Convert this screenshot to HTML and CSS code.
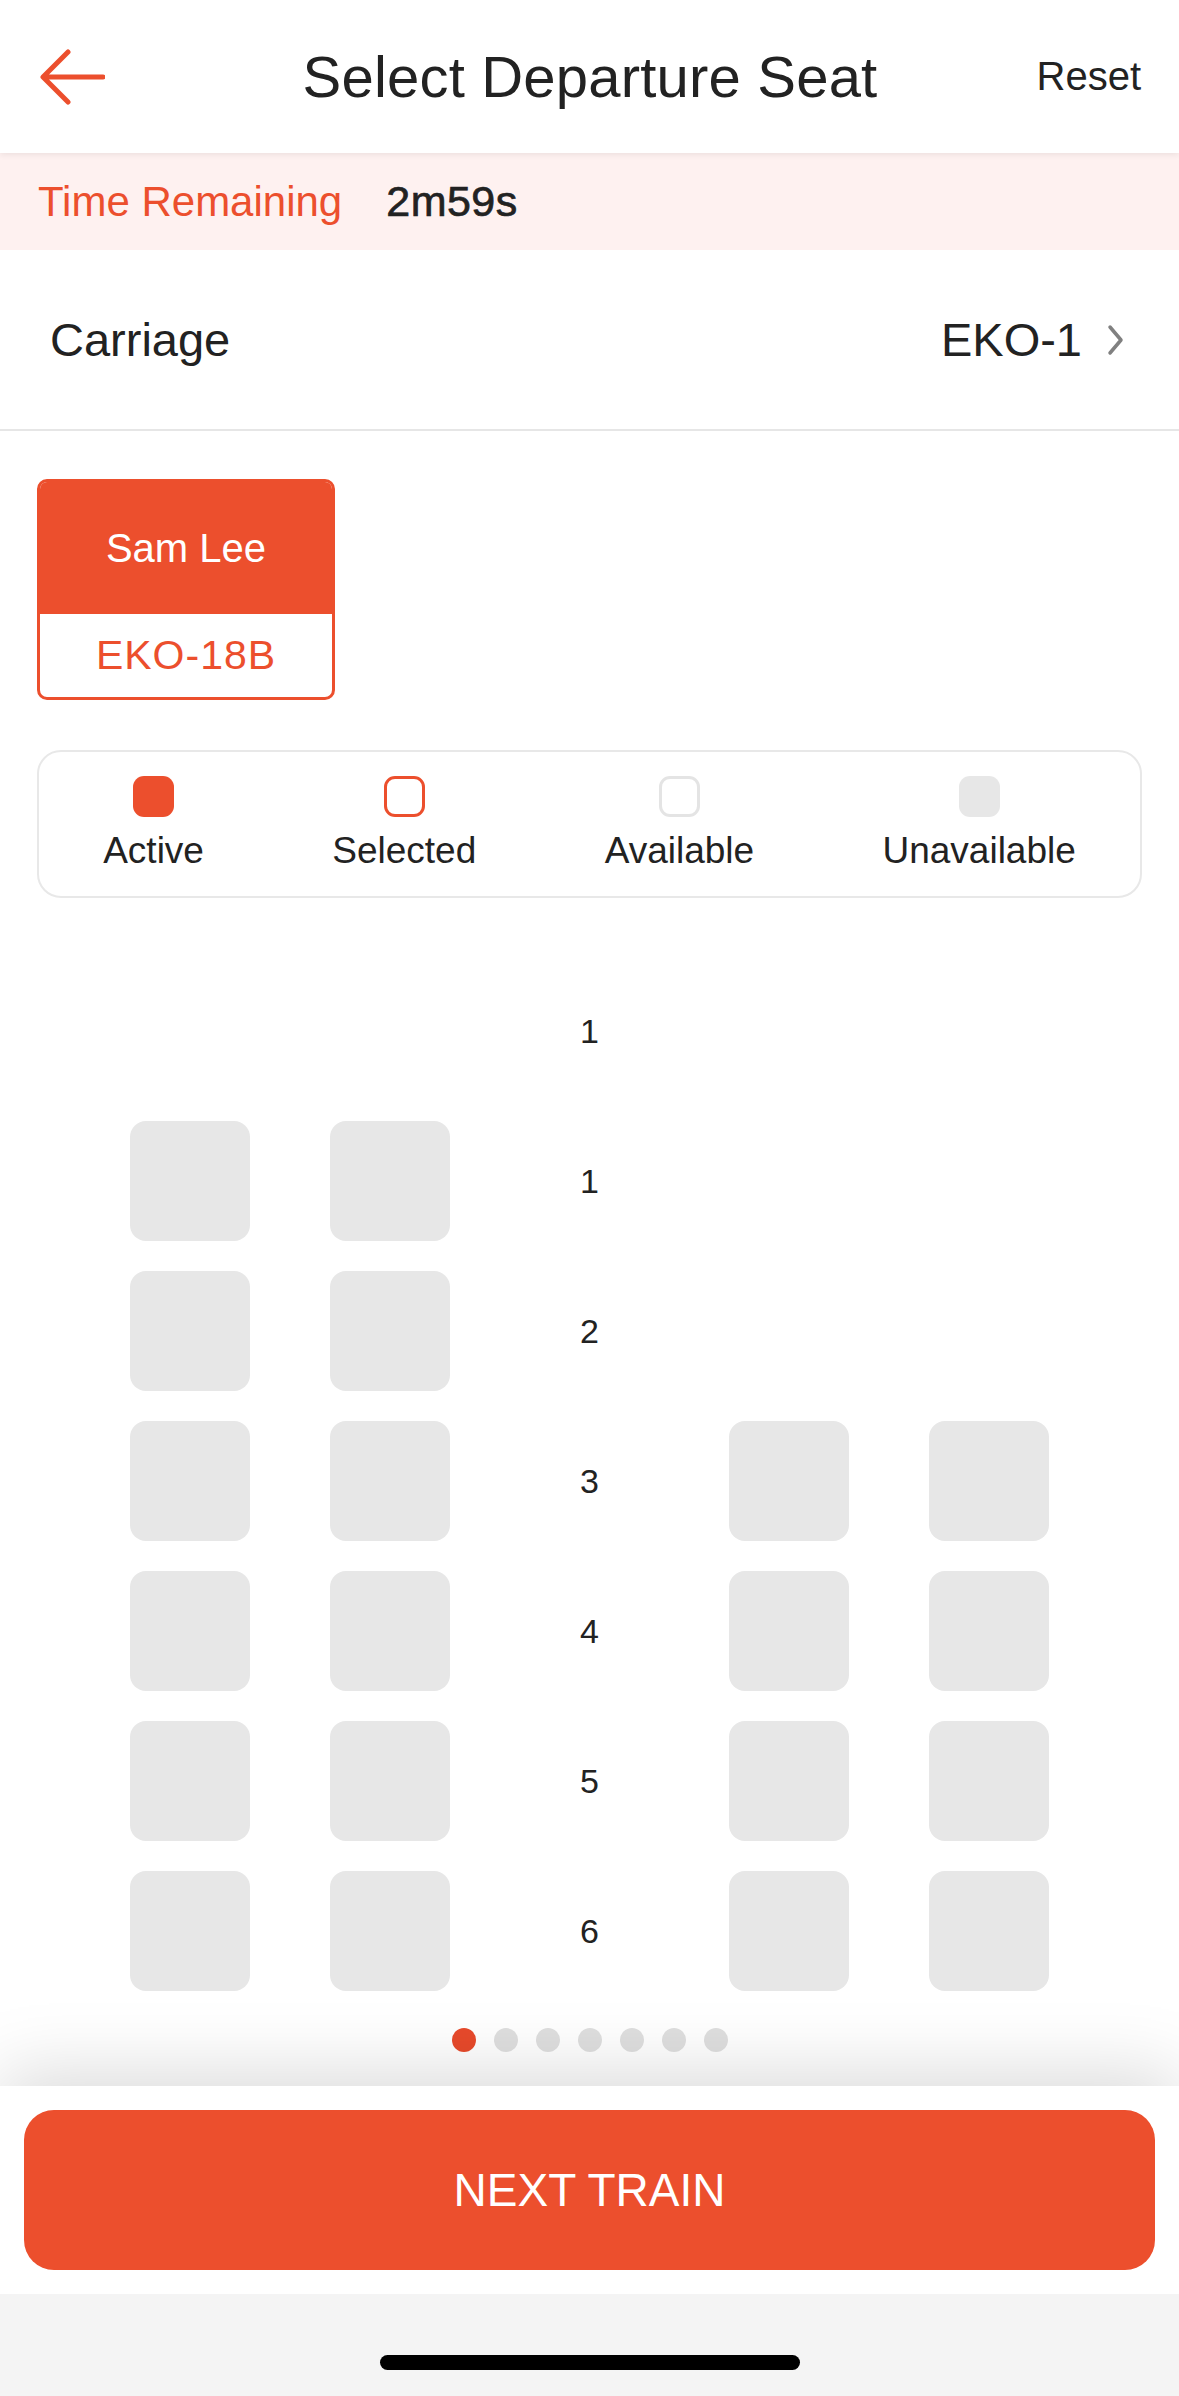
FILE: index.html
```html
<!DOCTYPE html>
<html lang="en">
<head>
    <meta charset="UTF-8">
    <meta name="viewport" content="width=device-width, initial-scale=1.0">
    <title>Select Departure Seat</title>
    <link rel="stylesheet" href="styles.css">
</head>
<body>
    <div class="page">
        <header class="topbar">
            <a class="back" href="#">
                <svg width="66" height="56" viewBox="0 0 66 56">
                    <path d="M64 28 H5 M29 3 L4 28 L29 53" fill="none" stroke="#ec4f2d" stroke-width="5" stroke-linecap="round" stroke-linejoin="round"/>
                </svg>
            </a>
            <h1 class="title">Select Departure Seat</h1>
            <a class="reset" href="#">Reset</a>
        </header>

        <div class="timer">
            <span class="timer-label">Time Remaining</span>
            <span class="timer-value">2m59s</span>
        </div>

        <div class="carriage">
            <span>Carriage</span>
            <span class="carriage-pick">
                EKO-1
                <svg width="18" height="32" viewBox="0 0 18 32">
                    <path d="M4 3 L15 16 L4 29" fill="none" stroke="#808080" stroke-width="3.5" stroke-linecap="round" stroke-linejoin="round"/>
                </svg>
            </span>
        </div>

        <div class="passenger">
            <div class="passenger-name">Sam Lee</div>
            <div class="passenger-seat">EKO-18B</div>
        </div>

        <div class="legend">
            <div class="legend-item">
                <span class="box box-active"></span>
                <span class="legend-text">Active</span>
            </div>
            <div class="legend-item">
                <span class="box box-selected"></span>
                <span class="legend-text">Selected</span>
            </div>
            <div class="legend-item">
                <span class="box box-available"></span>
                <span class="legend-text">Available</span>
            </div>
            <div class="legend-item">
                <span class="box box-unavailable"></span>
                <span class="legend-text">Unavailable</span>
            </div>
        </div>

        <div class="seatmap">
            <div></div><div></div><div class="row-num">1</div><div></div><div></div>

            <div class="seat"></div><div class="seat"></div><div class="row-num">1</div><div></div><div></div>
            <div class="seat"></div><div class="seat"></div><div class="row-num">2</div><div></div><div></div>
            <div class="seat"></div><div class="seat"></div><div class="row-num">3</div><div class="seat"></div><div class="seat"></div>
            <div class="seat"></div><div class="seat"></div><div class="row-num">4</div><div class="seat"></div><div class="seat"></div>
            <div class="seat"></div><div class="seat"></div><div class="row-num">5</div><div class="seat"></div><div class="seat"></div>
            <div class="seat"></div><div class="seat"></div><div class="row-num">6</div><div class="seat"></div><div class="seat"></div>
        </div>

        <div class="dots">
            <span class="dot on"></span>
            <span class="dot"></span>
            <span class="dot"></span>
            <span class="dot"></span>
            <span class="dot"></span>
            <span class="dot"></span>
            <span class="dot"></span>
        </div>

        <footer class="footer">
            <div class="footer-main">
                <button class="next">NEXT TRAIN</button>
            </div>
            <div class="home-area">
                <span class="home-bar"></span>
            </div>
        </footer>
    </div>
</body>
</html>
```

FILE: styles.css
```css
body {
    margin: 0;
    font-family: 'Liberation Sans', Arial, sans-serif;
    color: #222;
    background: #fff;
}
.page {
    min-height: 100vh;
    display: flex;
    flex-direction: column;
    overflow: hidden;
}
.topbar {
    height: 153px;
    display: grid;
    grid-template-columns: 1fr auto 1fr;
    align-items: center;
    padding: 0 38px 0 39px;
    background: #fff;
    position: relative;
    z-index: 2;
    box-shadow: 0 2px 6px rgba(0, 0, 0, 0.07);
}
.back {
    display: flex;
    align-items: center;
}
.title {
    margin: 0;
    font-size: 58px;
    font-weight: 400;
    letter-spacing: 0.2px;
    color: #222;
}
.reset {
    justify-self: end;
    font-size: 40px;
    color: #222;
    text-decoration: none;
}
.timer {
    height: 97px;
    display: flex;
    align-items: center;
    gap: 44px;
    padding-left: 38px;
    background: #fef1f0;
    font-size: 42px;
}
.timer-label {
    color: #ec4f2d;
}
.timer-value {
    font-size: 43px;
    letter-spacing: 0.5px;
    -webkit-text-stroke: 0.7px #222;
    color: #222;
}
.carriage {
    height: 179px;
    display: flex;
    align-items: center;
    justify-content: space-between;
    padding: 0 55px 0 50px;
    border-bottom: 2px solid #e6e6e6;
    font-size: 47px;
}
.carriage-pick {
    display: flex;
    align-items: center;
    gap: 24px;
}
.passenger {
    margin: 48px 0 0 37px;
    width: 298px;
    border: 3px solid #ec4f2d;
    border-radius: 10px;
    overflow: hidden;
    box-sizing: border-box;
    text-align: center;
    font-size: 40px;
}
.passenger-name {
    height: 132px;
    line-height: 132px;
    background: #ec4f2d;
    color: #fff;
}
.passenger-seat {
    height: 83px;
    line-height: 83px;
    font-size: 41px;
    color: #ec4f2d;
    letter-spacing: 1px;
}
.legend {
    margin: 50px 37px 0;
    height: 148px;
    box-sizing: border-box;
    border: 2px solid #e8e8e8;
    border-radius: 24px;
    padding-top: 24px;
    display: flex;
    justify-content: space-around;
}
.legend-item {
    display: flex;
    flex-direction: column;
    align-items: center;
}
.box {
    width: 41px;
    height: 41px;
    box-sizing: border-box;
    border-radius: 11px;
}
.box-active {
    background: #ec4f2d;
}
.box-selected {
    border: 3px solid #ec4f2d;
}
.box-available {
    border: 3px solid #e4e4e4;
}
.box-unavailable {
    background: #e7e7e7;
}
.legend-text {
    margin-top: 13px;
    font-size: 37px;
    line-height: 42px;
    color: #222;
}
.seatmap {
    margin-top: 73px;
    display: grid;
    grid-template-columns: 120px 120px 119px 120px 120px;
    grid-auto-rows: 120px;
    column-gap: 80px;
    row-gap: 30px;
    justify-content: center;
}
.seat {
    background: #e7e7e7;
    border-radius: 16px;
}
.row-num {
    display: flex;
    align-items: center;
    justify-content: center;
    font-size: 34px;
    color: #222;
}
.dots {
    margin-top: 37px;
    display: flex;
    justify-content: center;
    gap: 18px;
}
.dot {
    width: 24px;
    height: 24px;
    border-radius: 50%;
    background: #dfdfdf;
}
.dot.on {
    background: #e84a2b;
}
.footer {
    margin-top: auto;
    position: relative;
    z-index: 1;
    box-shadow: 0 -12px 70px rgba(0, 0, 0, 0.15);
}
.footer-main {
    background: #fff;
    padding: 24px;
}
.next {
    display: block;
    width: 100%;
    height: 160px;
    border: none;
    border-radius: 30px;
    background: #ec4f2d;
    color: #fff;
    font-family: 'Liberation Sans', Arial, sans-serif;
    font-size: 46px;
    cursor: pointer;
}
.home-area {
    height: 102px;
    background: #f4f4f4;
    display: flex;
    justify-content: center;
    padding-top: 61px;
    box-sizing: border-box;
}
.home-bar {
    width: 420px;
    height: 15px;
    border-radius: 8px;
    background: #000;
}
```
